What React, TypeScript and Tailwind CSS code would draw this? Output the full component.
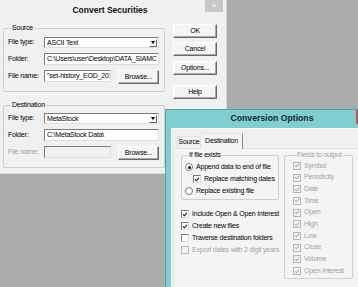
import React from 'react';

const Check = ({ color = '#000' }: { color?: string }) => (
  <svg width="7" height="7" viewBox="0 0 7 7" className="block">
    <path d="M1.2 3.4 L2.8 5 L5.8 1.6" fill="none" stroke={color} strokeWidth="1.3" />
  </svg>
);

const CheckBox = ({ checked, disabled }: { checked?: boolean; disabled?: boolean }) => (
  <div
    className={`w-[8px] h-[8px] shrink-0 flex items-center justify-center border ${
      disabled ? 'border-[#b5b5b5] bg-[#f4f4f4]' : 'border-t-[#7a7a7a] border-l-[#7a7a7a] border-r-[#d8d8d8] border-b-[#d8d8d8] bg-white'
    }`}
  >
    {checked && <Check color={disabled ? '#a8a8a8' : '#111'} />}
  </div>
);

const Radio = ({ checked }: { checked?: boolean }) => (
  <div className="w-[8px] h-[8px] shrink-0 rounded-full border border-[#7a7a7a] bg-white flex items-center justify-center">
    {checked && <div className="w-[3px] h-[3px] rounded-full bg-black" />}
  </div>
);

const Btn = ({ label, w = 'w-[44px]' }: { label: string; w?: string }) => (
  <div
    className={`${w} h-[14px] shrink-0 flex items-center justify-center bg-[#f5f5f5] border border-t-white border-l-white border-r-[#6a6a6a] border-b-[#6a6a6a] shadow-[inset_-1px_-1px_0_#a8a8a8] text-[7px] text-black whitespace-nowrap`}
  >
    {label}
  </div>
);

const Field = ({ value, w, disabled }: { value?: string; w: string; disabled?: boolean }) => (
  <div
    className={`${w} h-[12px] shrink-0 overflow-hidden whitespace-nowrap px-[2px] leading-[10px] text-[7px] border border-t-[#7c7c7c] border-l-[#7c7c7c] border-r-[#dedede] border-b-[#dedede] ${
      disabled ? 'bg-[#f0f0f0]' : 'bg-white'
    }`}
  >
    {value}
  </div>
);

const Select = ({ value }: { value: string }) => (
  <div className="w-[115px] h-[11px] shrink-0 flex items-center bg-white border border-t-[#7c7c7c] border-l-[#7c7c7c] border-r-[#dedede] border-b-[#dedede] text-[7px]">
    <span className="flex-1 px-[2px] leading-[9px] whitespace-nowrap">{value}</span>
    <div className="w-[8px] h-[8px] mr-[1px] flex items-center justify-center bg-[#f2f2f2] border border-t-white border-l-white border-r-[#6a6a6a] border-b-[#6a6a6a]">
      <div className="w-0 h-0 border-l-[2.5px] border-r-[2.5px] border-t-[3px] border-l-transparent border-r-transparent border-t-black" />
    </div>
  </div>
);

const Group = ({
  title,
  children,
  className = '',
  gray,
}: {
  title: string;
  children: React.ReactNode;
  className?: string;
  gray?: boolean;
}) => (
  <fieldset className={`border border-[#cfcfcf] rounded-[2px] ${className}`}>
    <legend
      className={`ml-[3px] px-[1px] text-[7px] leading-[8px] whitespace-nowrap ${gray ? 'text-[#a3a3a3]' : 'text-black'}`}
    >
      {title}
    </legend>
    {children}
  </fieldset>
);

const Row = ({ label, children, gray }: { label: string; children: React.ReactNode; gray?: boolean }) => (
  <div className="flex items-center">
    <span className={`w-[36px] shrink-0 whitespace-nowrap text-[7px] ${gray ? 'text-[#a3a3a3]' : 'text-black'}`}>
      {label}
    </span>
    {children}
  </div>
);

const Opt = ({ children, label, gray }: { children: React.ReactNode; label: string; gray?: boolean }) => (
  <div className="h-[12px] flex items-center gap-[3px]">
    {children}
    <span className={`text-[7px] whitespace-nowrap ${gray ? 'text-[#a3a3a3]' : 'text-black'}`}>{label}</span>
  </div>
);

const fields = ['Symbol', 'Periodicity', 'Date', 'Time', 'Open', 'High', 'Low', 'Close', 'Volume', 'Open Interest'];

export default function App() {
  return (
    <div className="relative w-[358px] h-[287px] overflow-hidden bg-[#ababab] font-['Liberation_Sans',Arial,sans-serif] tracking-[-0.2px] text-black">
      {/* Convert Securities */}
      <div className="absolute left-0 top-0 w-[227px] h-[174px] bg-[#f0f0f0] border-r border-b border-[#d6d6d6]">
        <div className="relative h-[20px] flex items-center justify-center pr-[6px]">
          <span className="font-bold text-[8.5px] tracking-normal text-[#111]">Convert Securities</span>
          <div className="absolute right-[3px] top-0 w-[18px] h-[12px] bg-[#c7c7c7] flex items-center justify-center text-white text-[8px] leading-none">
            ×
          </div>
        </div>

        <div className="flex pl-[3px]">
          <div className="w-[162px] flex flex-col">
            <Group title="Source" className="mt-[4px] px-[4px] pb-[7px]">
              <div className="mt-[5px]">
                <Row label="File type:">
                  <Select value="ASCII Text" />
                </Row>
              </div>
              <div className="mt-[5px]">
                <Row label="Folder:">
                  <Field w="w-[115px]" value="C:\Users\user\Desktop\DATA_SIAMC" />
                </Row>
              </div>
              <div className="mt-[5px] flex items-start">
                <Row label="File name:">
                  <Field w="w-[67px]" value={'"set-history_EOD_201'} />
                </Row>
                <div className="ml-[7px]">
                  <Btn label="Browse..." w="w-[41px]" />
                </div>
              </div>
            </Group>

            <Group title="Destination" className="mt-[9px] px-[4px] pb-[7px]">
              <div className="mt-[4px]">
                <Row label="File type:">
                  <Select value="MetaStock" />
                </Row>
              </div>
              <div className="mt-[5px]">
                <Row label="Folder:">
                  <Field w="w-[115px]" value="C:\MetaStock Data\" />
                </Row>
              </div>
              <div className="mt-[5px] flex items-start">
                <Row label="File name:" gray>
                  <Field w="w-[67px]" disabled />
                </Row>
                <div className="ml-[7px]">
                  <Btn label="Browse..." w="w-[41px]" />
                </div>
              </div>
            </Group>
          </div>

          <div className="ml-[8px] mt-[4px] flex flex-col">
            <Btn label="OK" />
            <div className="mt-[4px]">
              <Btn label="Cancel" />
            </div>
            <div className="mt-[5px]">
              <Btn label="Options..." />
            </div>
            <div className="mt-[10px]">
              <Btn label="Help" />
            </div>
          </div>
        </div>
      </div>

      {/* Conversion Options */}
      <div className="absolute left-[165px] top-[109px] w-[214px] h-[190px] bg-[#7fcfd0] border border-[#5d9ea0] flex flex-col">
        <div className="relative h-[18px] shrink-0 flex items-center justify-center">
          <span className="font-bold text-[8.7px] tracking-normal text-[#14282a]">Conversion Options</span>
          <div className="absolute left-[190px] top-0 w-[34px] h-[14px] bg-[#c75050]" />
        </div>

        <div className="ml-[5px] flex-1 bg-[#f0f0f0] border-l border-t border-white flex flex-col">
          <div className="flex items-end pl-[5px] pt-[3px]">
            <div className="w-[23px] h-[12px] flex items-center justify-center text-[7px] bg-[#f0f0f0] border-t border-l border-[#e2e2e2]">
              Source
            </div>
            <div className="w-[43px] h-[16px] flex items-center justify-center text-[7px] bg-[#f4f4f4] border-t border-l border-r border-t-[#e2e2e2] border-l-[#e2e2e2] border-r-[#8a8a8a] relative top-[1px]">
              Destination
            </div>
          </div>

          <div className="ml-[1px] flex-1 border-t border-l border-[#e2e2e2] bg-[#f4f4f4] pl-[7px] pt-[2px] flex">
            <div className="w-[95px] shrink-0 flex flex-col">
              <Group title="If file exists" className="px-[3px] pb-[2px]">
                <div className="mt-[2px]">
                  <Opt label="Append data to end of file">
                    <Radio checked />
                  </Opt>
                  <div className="pl-[8px]">
                    <Opt label="Replace matching dates">
                      <CheckBox checked />
                    </Opt>
                  </div>
                  <Opt label="Replace existing file">
                    <Radio />
                  </Opt>
                </div>
              </Group>
              <div className="mt-[8px]">
                <Opt label="Include Open & Open Interest">
                  <CheckBox checked />
                </Opt>
                <Opt label="Create new files">
                  <CheckBox checked />
                </Opt>
                <Opt label="Traverse destination folders">
                  <CheckBox />
                </Opt>
                <Opt label="Export dates with 2 digit years" gray>
                  <CheckBox disabled />
                </Opt>
              </div>
            </div>

            <Group title="Fields to output" gray className="ml-[8px] w-[61px] shrink-0 self-start px-[8px] pb-[1px]">
              <div className="mt-[1px] flex flex-col">
                {fields.map((f) => (
                  <div key={f} className="h-[11.7px] flex items-center gap-[3px]">
                    <CheckBox checked disabled />
                    <span className="text-[7px] text-[#a3a3a3] whitespace-nowrap">{f}</span>
                  </div>
                ))}
              </div>
            </Group>
          </div>
        </div>
      </div>
    </div>
  );
}
